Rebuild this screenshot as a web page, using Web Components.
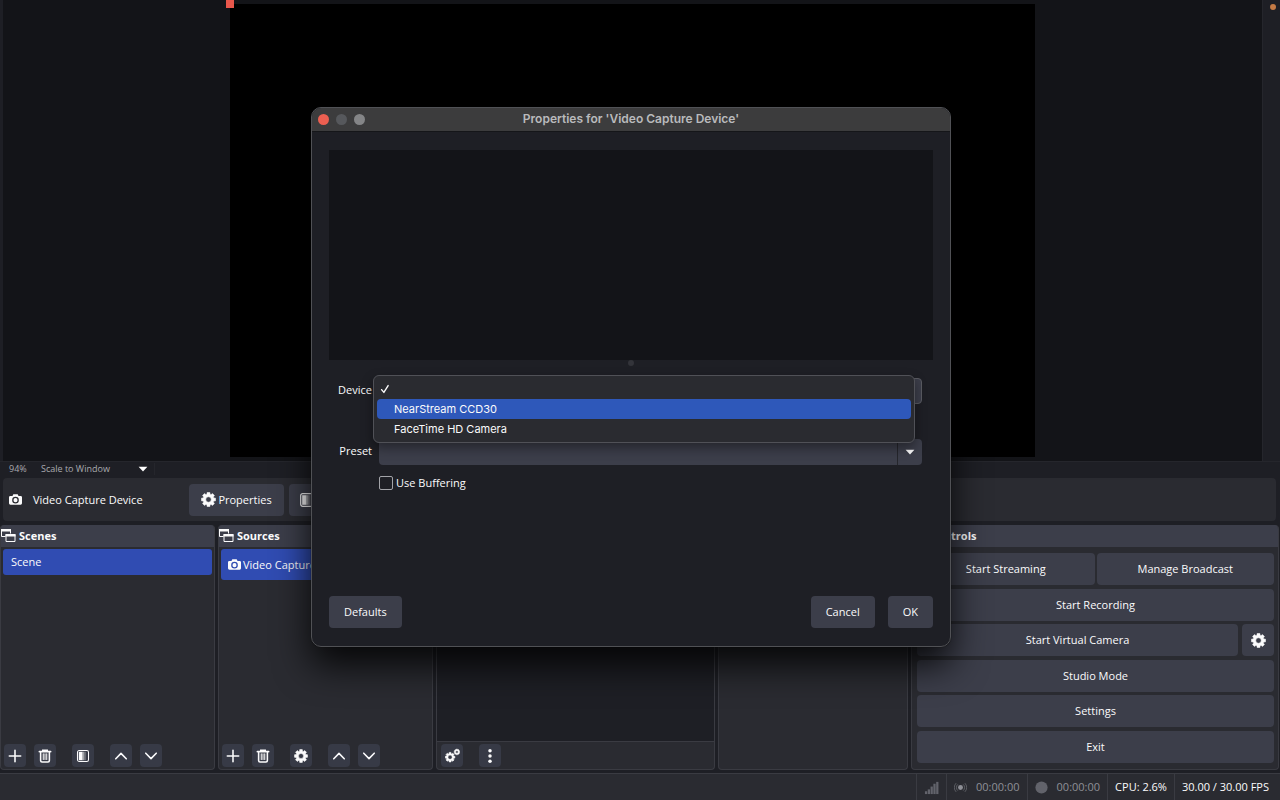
<!DOCTYPE html>
<html lang="en">
<head>
<meta charset="utf-8">
<title>OBS Studio</title>
<style>
  :root {
    --bg: #1e1f25;
    --panel: #2a2b31;
    --raised: #3c3e4a;
    --tool: #373a46;
    --line: #3a3b42;
    --accent: #304cb2;
    --text: #fbfbfc;
  }
  * { box-sizing: border-box; }
  body {
    margin: 0;
    background: var(--bg);
    color: var(--text);
    font-family: "Open Sans", "Noto Sans", sans-serif;
    font-size: 11px;
    line-height: 16px;
  }
</style>
</head>
<body>
<studio-app>
  <studio-preview></studio-preview>
  <scale-bar></scale-bar>
  <context-bar></context-bar>
  <dock-area>
    <studio-dock heading="Scenes">
      <source-item>Scene</source-item>
      <tool-button slot="tools" icon="plus" label="Add scene"></tool-button>
      <tool-button slot="tools" icon="trash" label="Remove scene"></tool-button>
      <tool-button slot="tools" icon="filter" label="Scene filters" apart></tool-button>
      <tool-button slot="tools" icon="up" label="Move up" apart></tool-button>
      <tool-button slot="tools" icon="down" label="Move down"></tool-button>
    </studio-dock>
    <studio-dock heading="Sources">
      <source-item icon="camera">Video Capture Device</source-item>
      <tool-button slot="tools" icon="plus" label="Add source"></tool-button>
      <tool-button slot="tools" icon="trash" label="Remove source"></tool-button>
      <tool-button slot="tools" icon="gear" label="Source properties" apart></tool-button>
      <tool-button slot="tools" icon="up" label="Move up" apart></tool-button>
      <tool-button slot="tools" icon="down" label="Move down"></tool-button>
    </studio-dock>
    <studio-dock dark>
      <tool-button slot="tools" icon="gears" label="Audio properties"></tool-button>
      <tool-button slot="tools" icon="dots" label="Mixer menu" apart></tool-button>
    </studio-dock>
    <studio-dock></studio-dock>
    <studio-dock heading="Controls" flush>
      <control-panel></control-panel>
    </studio-dock>
  </dock-area>
  <status-bar></status-bar>
</studio-app>
<properties-dialog heading="Properties for 'Video Capture Device'"></properties-dialog>

<script>
const gearPath = (cx, cy, r, hole) => {
  // eight-toothed gear with a round hole
  const pts = [];
  for (let i = 0; i < 8; i++) {
    const a = i * Math.PI / 4;
    [[-0.3, 0.76], [-0.19, 1], [0.19, 1], [0.3, 0.76]].forEach(([d, k]) => {
      pts.push((cx + Math.sin(a + d) * r * k).toFixed(2) + ' ' + (cy - Math.cos(a + d) * r * k).toFixed(2));
    });
  }
  return `<path fill="currentColor" stroke="currentColor" stroke-width=".6" stroke-linejoin="round" fill-rule="evenodd" d="M${pts.join('L')}Z
    M${cx - hole} ${cy}a${hole} ${hole} 0 1 0 ${hole * 2} 0a${hole} ${hole} 0 1 0 ${-hole * 2} 0Z"/>`;
};

const ICONS = {
  plus: '<path d="M8 1.5v13M1.5 8h13" fill="none" stroke="currentColor" stroke-width="1.8" stroke-linecap="round"/>',
  trash: '<path d="M1.5 3h13M5.5 2.6V1.4h5v1.2M3 4.5v8.7q0 1.6 1.6 1.6h6.8q1.6 0 1.6-1.6V4.5" fill="none" stroke="currentColor" stroke-width="1.8" stroke-linecap="round"/><path d="M6 5.5v6.5M8 5.5v6.5M10 5.5v6.5" fill="none" stroke="currentColor" stroke-width="1.2" stroke-linecap="round"/>',
  filter: '<rect x="1.7" y="1.7" width="12.6" height="12.6" rx="2" fill="none" stroke="currentColor" stroke-width="1.2"/><path d="M3.2 3.2h4.3v9.6H3.2z" fill="currentColor"/><path d="M7.5 3.2h2v9.6h-2z" fill="currentColor" opacity=".55"/><path d="M9.5 3.2h2v9.6h-2z" fill="currentColor" opacity=".25"/>',
  up: '<path d="M2 11.2L8 5l6 6.2" fill="none" stroke="currentColor" stroke-width="1.8" stroke-linecap="round" stroke-linejoin="round"/>',
  down: '<path d="M2 4.8L8 11l6-6.2" fill="none" stroke="currentColor" stroke-width="1.8" stroke-linecap="round" stroke-linejoin="round"/>',
  dots: '<g fill="currentColor"><circle cx="8" cy="2" r="2"/><circle cx="8" cy="8" r="2"/><circle cx="8" cy="14" r="2"/></g>',
  gear: gearPath(8, 8, 7.6, 2.9),
  gears: gearPath(5.4, 9.8, 5.2, 2.3) + gearPath(12.7, 4.2, 3.1, 1.4),
  camera: '<path fill="currentColor" fill-rule="evenodd" d="M5.3 1.6h5.4l1 2h2.6q1.7 0 1.7 1.7v7.4q0 1.7-1.7 1.7H1.7Q0 14.4 0 12.7V5.3q0-1.7 1.7-1.7h2.6ZM8 4.7a4.1 4.1 0 1 0 0 8.2 4.1 4.1 0 1 0 0-8.2ZM8 6.3a2.5 2.5 0 1 1 0 5 2.5 2.5 0 1 1 0-5Z"/>',
  windows: '<path fill="none" stroke="currentColor" stroke-width="1" d="M4.5 8.5H.5v-7h9v4M5 6.5h9v7H5z"/><path fill="currentColor" d="M0 1h10v2.5H0zM4.5 6h10v2.5h-10z"/>',
  signal: '<g fill="currentColor"><rect x="1" y="12" width="2.4" height="3"/><rect x="4" y="10" width="2.4" height="5"/><rect x="7" y="7" width="2.4" height="8"/><rect x="10" y="4" width="2.4" height="11"/><rect x="13" y="2" width="2.4" height="13"/></g>',
  live: '<circle cx="8" cy="8" r="3" fill="currentColor"/><path d="M4.6 4.2a5.3 5.3 0 0 0 0 7.6M11.4 4.2a5.3 5.3 0 0 1 0 7.6M2.6 2.6a7.8 7.8 0 0 0 0 10.8M13.4 2.6a7.8 7.8 0 0 1 0 10.8" fill="none" stroke="currentColor" stroke-width="1" opacity=".6"/>',
  dot: '<circle cx="8" cy="8" r="7.5" fill="currentColor"/>',
  caret: '<path d="M1 4.5h14L8 12z" fill="currentColor"/>',
  check: '<path d="M2.5 9l3.7 4.5L13 2.5" fill="none" stroke="currentColor" stroke-width="2.2" stroke-linecap="round" stroke-linejoin="round"/>'
};

const icon = (name, size) =>
  `<svg viewBox="0 0 16 16" width="${size}" height="${size}" aria-hidden="true">${ICONS[name]}</svg>`;

const BASE = `
  *, *::before, *::after { box-sizing: border-box; }
  svg { display: block; flex: none; }
  button, select, input { font: inherit; color: inherit; margin: 0; }
  button {
    display: flex;
    align-items: center;
    justify-content: center;
    gap: 2px;
    height: 32px;
    padding: 0 15px;
    border: 0;
    border-radius: 4px;
    background: var(--raised);
  }
  select { appearance: none; border: 0; background: none; padding: 0; }
`;

class StudioElement extends HTMLElement {
  connectedCallback() {
    if (this.shadowRoot) return;
    this.attachShadow({ mode: 'open' });
    this.shadowRoot.innerHTML = `<style>${BASE}${this.styles()}</style>${this.markup()}`;
  }
  styles() { return ''; }
  markup() { return '<slot></slot>'; }
}

class StudioApp extends StudioElement {
  styles() {
    return `
      :host { display: flex; flex-direction: column; min-height: 100vh; }
      ::slotted(studio-preview) { flex: 1; }
    `;
  }
}

class StudioPreview extends StudioElement {
  styles() {
    return `
      :host { display: flex; min-height: 240px; padding-left: 3px; }
      .stage {
        flex: 1;
        display: grid;
        grid-template-rows: minmax(0, 1fr);
        justify-content: center;
        padding: 4px 0;
        background: #131418;
      }
      .canvas { position: relative; height: 100%; aspect-ratio: 16 / 9; background: #000; }
      .handle {
        position: absolute;
        left: -4px;
        top: -4px;
        width: 8px;
        height: 8px;
        background: #e8574b;
      }
      .gutter { width: 18px; display: flex; justify-content: flex-end; padding: 4px; border-left: 1px solid #25262c; }
      .lamp { width: 6px; height: 6px; border-radius: 50%; background: #c47a45; }
    `;
  }
  markup() {
    return `
      <div class="stage"><div class="canvas"><span class="handle"></span></div></div>
      <div class="gutter"><span class="lamp"></span></div>
    `;
  }
}

class ScaleBar extends StudioElement {
  styles() {
    return `
      :host {
        display: flex;
        align-items: center;
        height: 17px;
        padding: 0 0 3px 9px;
        border-top: 1px solid #25262c;
        color: #a9aaaf;
        font-size: 9px;
        line-height: 12px;
      }
      .zoom { width: 32px; }
      .mode { display: grid; align-items: center; width: 114px; border-right: 1px solid #25262c; }
      .mode > * { grid-area: 1 / 1; }
      .mode select { width: 100%; }
      .mode svg { justify-self: end; margin-right: 6px; color: #fff; }
    `;
  }
  markup() {
    return `
      <span class="zoom">94%</span>
      <span class="mode">
        <select aria-label="Preview scaling"><option>Scale to Window</option></select>
        ${icon('caret', 10)}
      </span>
    `;
  }
}

class ContextBar extends StudioElement {
  styles() {
    return `
      :host {
        display: flex;
        align-items: center;
        gap: 5px;
        height: 43px;
        margin: 0 4px 4px 3px;
        padding-left: 6px;
        border-radius: 4px;
        background: var(--panel);
      }
      .source { display: flex; align-items: center; gap: 11px; width: 175px; }
      .properties { width: 95px; padding: 0; }
      .filters { width: 90px; justify-content: flex-start; padding: 0 10px; }
    `;
  }
  markup() {
    return `
      <span class="source">${icon('camera', 13)}Video Capture Device</span>
      <button type="button" class="properties">${icon('gear', 15)}Properties</button>
      <button type="button" class="filters" aria-label="Filters">${icon('filter', 16)}</button>
    `;
  }
}

class DockArea extends StudioElement {
  styles() {
    return `
      :host {
        display: grid;
        grid-template-columns: 215fr 215fr 279fr 190fr 368fr;
        gap: 3px;
        min-height: 245px;
        margin-right: 1px;
      }
      ::slotted(*) { min-width: 0; }
    `;
  }
}

class StudioDock extends StudioElement {
  styles() {
    return `
      :host {
        display: flex;
        flex-direction: column;
        border: 1px solid var(--line);
        border-top: 0;
        border-radius: 4px;
        background: var(--panel);
        overflow: hidden;
      }
      header {
        display: flex;
        align-items: center;
        gap: 2px;
        height: 22px;
        background: var(--raised);
      }
      h2 { margin: 0; font-size: 11px; line-height: 16px; font-weight: 700; }
      .content { flex: 1; padding: 2px; }
      :host([dark]) .content { background: var(--bg); }
      :host([flush]) .content { display: grid; padding: 6px 4px 6px 5px; }
      footer { display: flex; gap: 8px; padding: 2px 3px; }
      :host([dark]) footer { padding: 2px 4px; border-top: 1px solid var(--line); }
    `;
  }
  markup() {
    const heading = this.getAttribute('heading');
    const tools = this.querySelector('[slot=tools]') ? '<footer><slot name="tools"></slot></footer>' : '';
    return `
      <header>${heading ? `${icon('windows', 16)}<h2>${heading}</h2>` : ''}</header>
      <div class="content"><slot></slot></div>
      ${tools}
    `;
  }
}

class SourceItem extends StudioElement {
  styles() {
    return `
      :host {
        display: flex;
        align-items: center;
        gap: 2px;
        height: 26px;
        padding: 0 8px;
        border-radius: 3px;
        background: var(--accent);
        white-space: nowrap;
      }
      :host([icon]) { height: 31px; padding: 0 7px; }
    `;
  }
  markup() {
    const name = this.getAttribute('icon');
    return `${name ? icon(name, 13) : ''}<span><slot></slot></span>`;
  }
}

class ToolButton extends StudioElement {
  styles() {
    return `
      :host { display: block; }
      :host([apart]) { margin-left: 8px; }
      button { width: 22px; height: 23px; padding: 0; background: var(--tool); }
    `;
  }
  markup() {
    const name = this.getAttribute('icon');
    return `<button type="button" aria-label="${this.getAttribute('label')}">${icon(name, name === 'gears' ? 15 : 14)}</button>`;
  }
}

class ControlPanel extends StudioElement {
  styles() {
    return `
      :host { display: flex; flex-direction: column; justify-content: space-between; }
      .row { display: flex; gap: 2px; }
      .row button { flex: 1; }
      .row .settings { flex: none; width: 32px; margin-left: 2px; padding: 0; }
    `;
  }
  markup() {
    return `
      <div class="row"><button type="button">Start Streaming</button><button type="button">Manage Broadcast</button></div>
      <div class="row"><button type="button">Start Recording</button></div>
      <div class="row">
        <button type="button">Start Virtual Camera</button>
        <button type="button" class="settings" aria-label="Virtual camera settings">${icon('gear', 15)}</button>
      </div>
      <div class="row"><button type="button">Studio Mode</button></div>
      <div class="row"><button type="button">Settings</button></div>
      <div class="row"><button type="button">Exit</button></div>
    `;
  }
}

class StatusBar extends StudioElement {
  styles() {
    return `
      :host {
        display: flex;
        justify-content: flex-end;
        height: 27px;
        margin-top: 3px;
        padding-right: 4px;
        border-top: 1px solid var(--line);
        background: var(--panel);
      }
      .cell {
        display: flex;
        align-items: center;
        gap: 9px;
        padding: 0 7px;
        border-left: 1px solid var(--line);
        white-space: nowrap;
      }
      .idle { color: #8e8f96; }
      .idle svg { color: #62636b; }
      .live svg { color: #8e8f96; }
    `;
  }
  markup() {
    return `
      <span class="cell idle">${icon('signal', 15)}</span>
      <span class="cell idle live">${icon('live', 13)}00:00:00</span>
      <span class="cell idle">${icon('dot', 13)}00:00:00</span>
      <span class="cell">CPU: 2.6%</span>
      <span class="cell">30.00 / 30.00 FPS</span>
    `;
  }
}

class DeviceMenu extends StudioElement {
  styles() {
    return `
      :host {
        display: block;
        padding: 3px;
        border: 1px solid #505157;
        border-radius: 6px;
        background: #2a2b30;
        box-shadow: 0 5px 12px rgba(0, 0, 0, .4);
        font-family: Inter, "Liberation Sans", sans-serif;
        font-size: 11px;
        line-height: 20px;
      }
      ul { list-style: none; margin: 0; padding: 0; }
      li { display: flex; align-items: center; height: 20px; padding-left: 17px; border-radius: 4px; }
      li.current { padding-left: 3px; }
      li.active { background: #2e58ba; }
    `;
  }
  markup() {
    return `
      <ul role="listbox" aria-label="Device">
        <li role="option" class="current" aria-selected="true" aria-label="None">${icon('check', 10)}</li>
        <li role="option" class="active">NearStream CCD30</li>
        <li role="option">FaceTime HD Camera</li>
      </ul>
    `;
  }
}

class PropertiesDialog extends StudioElement {
  styles() {
    return `
      :host {
        position: absolute;
        left: calc(50% - 329px);
        top: 107px;
        display: block;
        width: 640px;
        border: 1px solid #505155;
        border-radius: 10px;
        background: var(--bg);
        box-shadow: 0 0 1px #000, 0 18px 36px rgba(0, 0, 0, .85);
      }
      .titlebar {
        display: grid;
        grid-template-columns: 1fr auto 1fr;
        align-items: center;
        height: 24px;
        padding: 0 6px 1px;
        border-bottom: 1px solid #151619;
        border-radius: 9px 9px 0 0;
        background: #3c3c3d;
      }
      .lights { display: flex; gap: 7px; }
      .lights button { width: 11px; height: 11px; padding: 0; border-radius: 50%; background: #56585c; }
      .lights .close { background: #ec5f51; }
      .lights .zoom { background: #848587; }
      h1 {
        margin: 0;
        color: #b9babc;
        font: 600 12px/16px Inter, "Liberation Sans", sans-serif;
      }
      .body { padding: 18px 17px; }
      .view { height: 210px; background: #131418; }
      .grip { width: 6px; height: 6px; margin: 0 auto; border-radius: 50%; background: #33343a; }
      form { display: grid; grid-template-columns: 43px 1fr; column-gap: 7px; padding: 12px 11px 0 0; }
      .field { position: relative; display: grid; align-content: start; height: 61px; }
      .field > select { grid-area: 1 / 1; width: 100%; height: 26px; border-radius: 4px; background: var(--raised); }
      .field .outlined { border: 1px solid #5a5b62; }
      .arrow {
        grid-area: 1 / 1;
        justify-self: end;
        display: grid;
        place-items: center;
        width: 25px;
        height: 26px;
        border-left: 1px solid #25262c;
        pointer-events: none;
      }
      .label { padding-top: 4px; text-align: right; }
      .last { height: 36px; }
      device-menu { position: absolute; z-index: 1; left: -6px; right: 7px; top: -3px; }
      .check { grid-column: 2; display: flex; align-items: center; gap: 3px; }
      .check input {
        appearance: none;
        width: 14px;
        height: 14px;
        border: 1px solid #a3a4a9;
        border-radius: 2px;
      }
      .actions { display: flex; gap: 13px; padding-top: 105px; }
      .actions :first-child { margin-right: auto; }
    `;
  }
  markup() {
    return `
      <section role="dialog" aria-labelledby="title">
        <div class="titlebar">
          <span class="lights">
            <button type="button" class="close" aria-label="Close"></button>
            <button type="button" aria-label="Minimize"></button>
            <button type="button" class="zoom" aria-label="Zoom"></button>
          </span>
          <h1 id="title">${this.getAttribute('heading')}</h1>
        </div>
        <div class="body">
          <div class="view"></div>
          <div class="grip"></div>
          <form>
            <label class="label" for="device">Device</label>
            <span class="field">
              <select id="device" class="outlined"><option></option></select>
              <device-menu></device-menu>
            </span>
            <label class="label" for="preset">Preset</label>
            <span class="field last">
              <select id="preset"><option></option></select>
              <span class="arrow">${icon('caret', 10)}</span>
            </span>
            <span class="check">
              <input type="checkbox" id="buffering">
              <label for="buffering">Use Buffering</label>
            </span>
          </form>
          <div class="actions">
            <button type="button">Defaults</button>
            <button type="button">Cancel</button>
            <button type="button">OK</button>
          </div>
        </div>
      </section>
    `;
  }
}

customElements.define('studio-app', StudioApp);
customElements.define('studio-preview', StudioPreview);
customElements.define('scale-bar', ScaleBar);
customElements.define('context-bar', ContextBar);
customElements.define('dock-area', DockArea);
customElements.define('studio-dock', StudioDock);
customElements.define('source-item', SourceItem);
customElements.define('tool-button', ToolButton);
customElements.define('control-panel', ControlPanel);
customElements.define('status-bar', StatusBar);
customElements.define('device-menu', DeviceMenu);
customElements.define('properties-dialog', PropertiesDialog);
</script>
</body>
</html>
